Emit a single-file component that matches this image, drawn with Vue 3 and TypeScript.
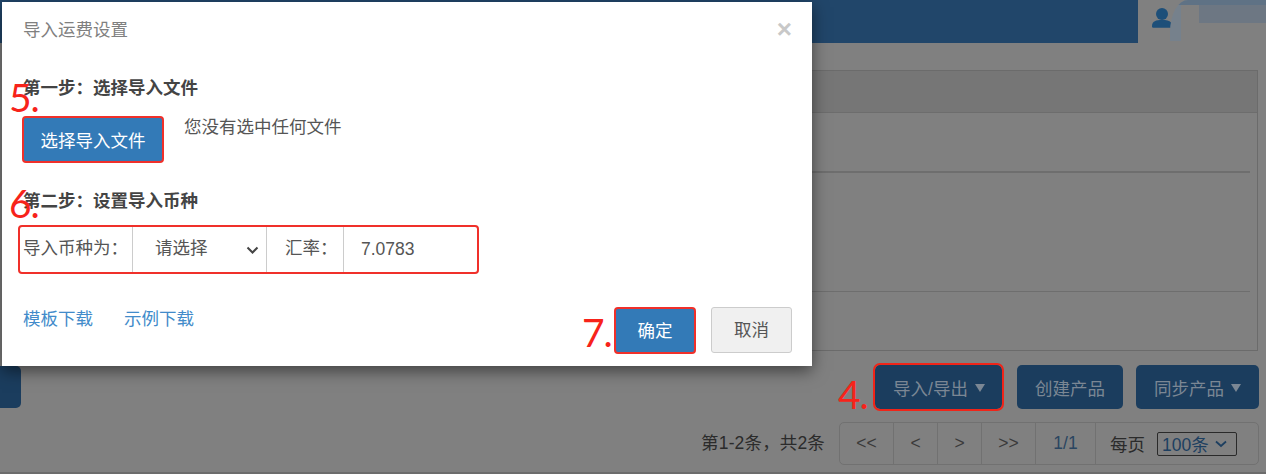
<script setup lang="ts">
const pagers: string[] = ['<<', '<', '>', '>>', '1/1']
</script>

<template>
  <div class="page">
    <header class="topbar">
      <div class="topbar-blue"></div>
      <div class="user">
        <svg class="user-icon" width="20" height="24" viewBox="0 0 20 24">
          <circle cx="11" cy="8" r="6" fill="#1d4f79" />
          <path d="M1 20c0-5 4-6 10-6s10 1 10 6v.5c0 .8-.6 1.200-1.200 1.200H2.200C1.500 21.700 1 21.300 1 20.500z" fill="#1d4f79" />
        </svg>
        <div class="avatar"><div class="avatar-inner"></div></div>
      </div>
    </header>

    <main class="main">
      <section class="panel">
        <div class="panel-head"></div>
        <div class="panel-row first"></div>
        <div class="panel-row second"></div>
      </section>

      <div class="actions">
        <button class="left-btn" type="button"></button>
        <div class="action-group">
          <button class="dark-btn import" type="button">导入/导出<i class="caret"></i></button>
          <button class="dark-btn create" type="button">创建产品</button>
          <button class="dark-btn sync" type="button">同步产品<i class="caret"></i></button>
        </div>
      </div>

      <div class="pagination">
        <span class="count">第1-2条，共2条</span>
        <div class="pager">
          <span v-for="p in pagers" :key="p" class="pager-cell">{{ p }}</span>
          <span class="per-page">每页<span class="per-select">100条<svg width="12" height="8" viewBox="0 0 12 8"><path d="M1 1.500l5 4.500 5-4.500" fill="none" stroke="#1d3f60" stroke-width="1.800" /></svg></span></span>
        </div>
      </div>
    </main>

    <div class="modal">
      <div class="modal-head">
        <span class="modal-title">导入运费设置</span>
        <span class="close">×</span>
      </div>
      <div class="step">
        <h4 class="step-title">第一步：选择导入文件</h4>
        <div class="file-row">
          <button class="primary file-btn" type="button">选择导入文件</button>
          <span class="file-text">您没有选中任何文件</span>
        </div>
      </div>
      <div class="step two">
        <h4 class="step-title">第二步：设置导入币种</h4>
        <div class="currency">
          <span class="c-label">导入币种为：</span>
          <span class="c-select">请选择
            <svg width="13" height="9" viewBox="0 0 13 9"><path d="M1.500 1.500L6.500 6.500L11.500 1.500" fill="none" stroke="#444" stroke-width="2" /></svg>
          </span>
          <span class="c-rate">汇率：</span>
          <span class="c-value">7.0783</span>
        </div>
      </div>
      <div class="modal-foot">
        <div class="links">
          <a>模板下载</a>
          <a>示例下载</a>
        </div>
        <div class="foot-btns">
          <button class="primary ok" type="button">确定</button>
          <button class="cancel" type="button">取消</button>
        </div>
      </div>
    </div>

    <span class="mark m4">4.</span>
    <span class="mark m5">5.</span>
    <span class="mark m6">6.</span>
    <span class="mark m7">7.</span>
  </div>
</template>

<style>
html, body { margin: 0; padding: 0; }
</style>

<style scoped>
.page {
  position: relative;
  width: 1266px;
  height: 474px;
  overflow: hidden;
  background: #808080;
  display: flex;
  flex-direction: column;
  font-family: "Liberation Sans", "Noto Sans CJK SC", sans-serif;
  font-size: 17.5px;
  border-bottom: 2px solid #6c6c6c;
  box-sizing: border-box;
}
.topbar { display: flex; height: 43px; flex: none; }
.topbar-blue { width: 1138px; background: #21466a; }
.user { flex: 1; display: flex; align-items: flex-start; position: relative; padding: 6px 0 0 13px; overflow: hidden; }
.user-icon { flex: none; }
.avatar {
  position: absolute; left: 32px; top: 0; width: 150px; height: 41px;
  border-radius: 18px 0 0 0 / 32px 0 0 0;
  background: #76818c;
  overflow: hidden;
}
.avatar::before { content: ""; position: absolute; left: 11px; top: 5px; right: 0; bottom: 0; background: #808080; }
.avatar::after { content: ""; position: absolute; left: 0; top: 0; right: 0; height: 5px; background: #5f7285; }
.avatar-inner { position: absolute; left: 29px; top: 5px; right: 0; height: 18px; background: #6d7783; }
.main { flex: 1; display: flex; flex-direction: column; padding: 27px 7px 0 0; }
.panel { margin-left: 300px; margin-right: 1px; height: 281px; border: 1px solid #6b6b6b; border-left: 0; box-sizing: border-box; }
.panel-head { height: 42px; background: #767676; border-bottom: 1px solid #6d6d6d; box-sizing: border-box; }
.panel-row { margin-right: 7px; border-bottom: 1px solid #6e6e6e; }
.panel-row.first { height: 58px; border-bottom-width: 2px; }
.panel-row.second { height: 118px; }
.actions { display: flex; justify-content: space-between; margin-top: 13px; height: 45px; }
.left-btn { width: 21px; height: 42px; margin-top: 2px; border: 0; border-radius: 0 5px 5px 0; background: #1b3d5e; }
.action-group { display: flex; align-items: flex-start; gap: 14px; }
.dark-btn {
  height: 44px; margin-top: 1px; border: 0; border-radius: 5px; background: #1b3d5e; color: #7b8794;
  font: inherit; padding: 0; white-space: nowrap;
  box-sizing: border-box; display: flex; align-items: center; justify-content: center;
}
.import { width: 127px; margin-left: 1px; margin-right: 1px; padding-left: 1px; outline: 2px solid #f02418; outline-offset: 0; }
.create { width: 106px; }
.sync { width: 123px; margin-left: -1px; }
.caret {
  display: inline-block; width: 0; height: 0; margin-left: 7px; margin-top: 2px;
  border-left: 5px solid transparent; border-right: 5px solid transparent; border-top: 8px solid #7b8794;
}
.pagination { display: flex; justify-content: flex-end; align-items: flex-start; margin-top: 13px; height: 43px; color: #2b2b2b; }
.count { margin-right: 14px; line-height: 43px; letter-spacing: .15px; }
.pager { display: flex; width: 420px; height: 43px; border: 1px solid #717171; border-radius: 5px; box-sizing: border-box; }
.pager-cell {
  display: flex; align-items: center; justify-content: center;
  width: 44px; border-right: 1px solid #717171; color: #3a3a3a; box-sizing: border-box;
}
.pager-cell:nth-child(1) { width: 54px; }
.pager-cell:nth-child(4) { width: 54px; }
.pager-cell:nth-child(5) { width: 60px; color: #2a4560; }
.per-page { display: flex; align-items: center; margin-left: 14px; gap: 12px; color: #2b2b2b; white-space: nowrap; }
.per-select {
  display: flex; align-items: center; gap: 6px; height: 24px; width: 80px; padding-left: 4px;
  border: 1px solid #2a2a2a; border-radius: 2px; color: #1d3f60; box-sizing: border-box;
}
.modal {
  position: absolute; left: 2px; top: 2px; width: 810px; height: 364px;
  background: #fff; box-shadow: 0 5px 15px rgba(0, 0, 0, .5);
  padding: 0 20px 0 20px; box-sizing: border-box; color: #555;
}
.modal-head { display: flex; justify-content: space-between; align-items: center; height: 54px; }
.modal-title { margin-left: 1px; margin-top: -2px; color: #808080; }
.close { color: #c8c8c8; font-size: 26px; font-weight: 700; line-height: 1; }
.step { margin-top: 21px; padding-left: 1px; }
.step.two { margin-top: 27px; }
.step-title { margin: 0; font-size: 17.5px; line-height: 22px; font-weight: 700; color: #444; }
.file-row { display: flex; align-items: flex-start; margin: 17px 0 0 -2px; }
.primary {
  background: #337ab7; color: #fff; border: 2px solid #f0302a; border-radius: 4px; font: inherit; box-sizing: border-box;
}
.file-btn { width: 142px; height: 47px; margin-left: 1px; padding: 0 0 1px; }
.file-text { margin-left: 20px; line-height: 22px; }
.currency {
  display: flex; align-items: stretch; height: 49px; width: 461px; margin: 13px 0 0 -5px;
  border: 2px solid #f0302a; border-radius: 4px; box-sizing: border-box; line-height: 43px;
}
.c-label { width: 110px; padding-left: 3px; white-space: nowrap; box-sizing: content-box; }
.c-select {
  width: 135px; padding-left: 22px; box-sizing: border-box;
  border-left: 1px solid #ccc; border-right: 1px solid #ccc; position: relative; margin-left: -1px;
}
.c-select svg { position: absolute; right: 7px; top: 19px; }
.c-rate { width: 77px; padding-left: 18px; box-sizing: border-box; border-right: 1px solid #ccc; white-space: nowrap; }
.c-value { padding: 1px 0 0 17px; }
.modal-foot { display: flex; justify-content: space-between; align-items: flex-start; margin-top: 21px; }
.links { display: flex; gap: 31px; padding-left: 1px; margin-top: 13px; line-height: 22px; }
.links a { color: #428bca; }
.foot-btns { display: flex; gap: 15px; margin: 12px 0 0 0; }
.ok { width: 82px; height: 47px; padding: 0 0 3px; }
.cancel {
  width: 81px; height: 46px; background: #f0f0f0; border: 1px solid #ccc; border-radius: 3px; color: #555;
  font: inherit; box-sizing: border-box; padding: 0 0 3px;
}
.mark { position: absolute; color: #f7231a; font-family: "Lato", sans-serif; font-weight: 400; font-size: 39px; line-height: 40px; letter-spacing: -1px; }
.m4 { left: 838px; top: 374px; }
.m5 { left: 9px; top: 77px; }
.m6 { left: 9px; top: 183px; }
.m7 { left: 582px; top: 312px; }
</style>
